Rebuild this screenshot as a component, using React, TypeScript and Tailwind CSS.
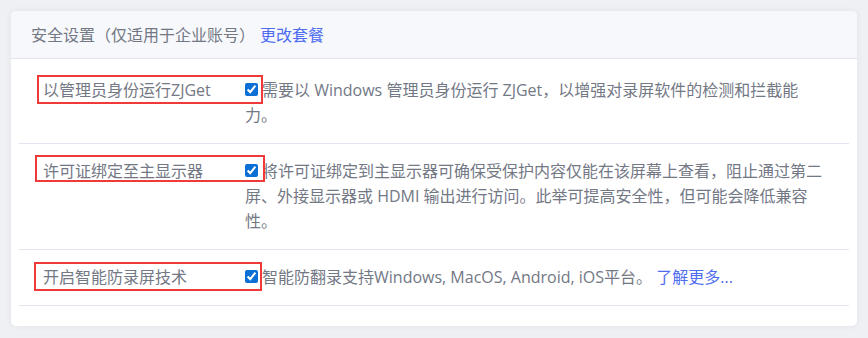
import type { ReactNode } from "react";

type Row = {
  label: string;
  desc: ReactNode;
  box: string;
};

const rows: Row[] = [
  {
    label: "以管理员身份运行ZJGet",
    desc: "需要以 Windows 管理员身份运行 ZJGet，以增强对录屏软件的检测和拦截能力。",
    box: "left-[-6px] top-[-3px] h-[29px] w-[226px]",
  },
  {
    label: "许可证绑定至主显示器",
    desc: "将许可证绑定到主显示器可确保受保护内容仅能在该屏幕上查看，阻止通过第二屏、外接显示器或 HDMI 输出进行访问。此举可提高安全性，但可能会降低兼容性。",
    box: "left-[-8px] top-[-4px] h-[27px] w-[230px]",
  },
  {
    label: "开启智能防录屏技术",
    desc: (
      <>
        智能防翻录支持Windows, MacOS, Android, iOS平台。{" "}
        <a className="text-[#4d6cf0]" href="#">
          了解更多...
        </a>
      </>
    ),
    box: "left-[-9px] top-[-3px] h-[29px] w-[228px]",
  },
];

export default function App() {
  return (
    <div
      className="h-[338px] bg-[#eff0f4] p-[11px] text-[16px] text-[#737885]"
      style={{ fontFamily: '"Open Sans", "Noto Sans CJK SC", sans-serif' }}
    >
      <div className="w-[846px] rounded-[5px] bg-white pb-[20px] shadow-[0_0_6px_rgba(0,0,0,0.06)]">
        <div className="flex h-[48px] items-center rounded-t-[5px] border-b border-[#e1e3ed] bg-[#f7f8fc] px-[20px]">
          <span>安全设置（仅适用于企业账号）</span>
          <a className="ml-[5px] text-[#4d6cf0]" href="#">
            更改套餐
          </a>
        </div>

        <div className="px-[8px] pt-[4px]">
          {rows.map((row) => (
            <div
              key={row.label}
              className="flex border-b border-[#e4e5f0] px-[24px] py-[15px] leading-[25px]"
            >
              <div className="relative w-[202px] shrink-0">
                <span>{row.label}</span>
                <span
                  className={`absolute border-2 border-[#f03a3a] ${row.box}`}
                />
              </div>
              <div className="w-[580px]">
                <input
                  type="checkbox"
                  defaultChecked
                  className="relative top-[-2px] mr-[4px] h-[13px] w-[13px] align-middle accent-[#0b6fd6]"
                />
                {row.desc}
              </div>
            </div>
          ))}
        </div>
      </div>
    </div>
  );
}
